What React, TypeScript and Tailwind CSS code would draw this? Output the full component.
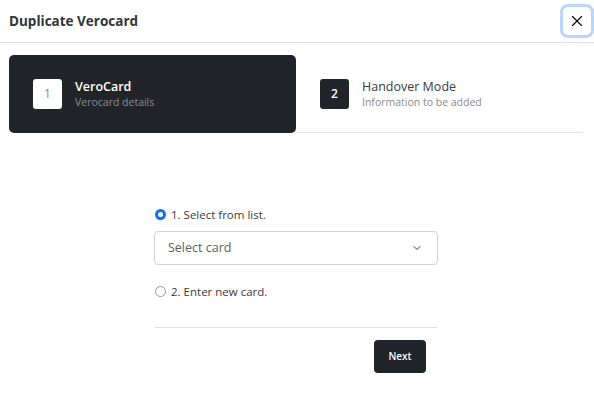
import { ChevronDown, X } from 'lucide-react'

const FONT = { fontFamily: '"Open Sans", Inter, sans-serif' }

function StepItem({
  num,
  title,
  subtitle,
  active,
}: {
  num: string
  title: string
  subtitle: string
  active?: boolean
}) {
  return (
    <div
      className={
        active
          ? 'flex h-[78px] flex-1 items-center gap-[13px] rounded-[5px] bg-[#212428] pl-[24px]'
          : 'flex h-[78px] flex-1 items-center gap-[13px] border-b border-[#e2e2e2] pl-[24px]'
      }
    >
      <div
        className={
          active
            ? 'flex h-[30px] w-[29px] items-center justify-center rounded-[3px] bg-white text-[12px] text-[#8a8a8a]'
            : 'flex h-[30px] w-[29px] items-center justify-center rounded-[3px] bg-[#212428] text-[12px] font-semibold text-white'
        }
      >
        {num}
      </div>
      <div className="flex flex-col">
        <span
          className={
            active
              ? 'text-[12.5px] leading-[17px] font-semibold text-white'
              : 'text-[12.5px] leading-[17px] text-[#3a3a3a]'
          }
        >
          {title}
        </span>
        <span
          className={
            active
              ? 'text-[10.5px] leading-[15px] text-[#8b8e93]'
              : 'text-[10.5px] leading-[15px] text-[#8a8a8a]'
          }
        >
          {subtitle}
        </span>
      </div>
    </div>
  )
}

export default function App() {
  return (
    <div className="h-[403px] w-[594px] bg-white" style={FONT}>
      <header className="flex h-[43px] items-center justify-between border-b border-[#dee2e6] pl-[9px] pr-[3px]">
        <h1 className="text-[13.5px] font-bold text-[#2f343a]">Duplicate Verocard</h1>
        <button
          type="button"
          className="flex h-[28px] w-[28px] items-center justify-center rounded-[5px] ring-[3px] ring-[#bcd6fb]"
        >
          <X size={18} strokeWidth={1.5} className="text-black" />
        </button>
      </header>

      <div className="mx-[9px] mt-[12px] mr-[11px] flex">
        <StepItem num="1" title="VeroCard" subtitle="Verocard details" active />
        <StepItem num="2" title="Handover Mode" subtitle="Information to be added" />
      </div>

      <div className="mt-[73px] ml-[154px] w-[284px]">
        <label className="flex items-center gap-[5px] text-[11.5px] text-[#3a3a3a]">
          <span className="ml-[1px] h-[11px] w-[11px] rounded-full border-[3px] border-[#0d6efd] bg-white" />
          1. Select from list.
        </label>
        <div className="mt-[8px] flex h-[34px] items-center justify-between rounded-[4px] border border-[#ced4da] pl-[13px] pr-[14px]">
          <span className="text-[12.5px] text-[#5d6166]">Select card</span>
          <ChevronDown size={12} strokeWidth={2} className="text-[#3a3a3a]" />
        </div>
        <label className="mt-[18px] flex items-center gap-[5px] text-[11.5px] text-[#3a3a3a]">
          <span className="ml-[1px] h-[11px] w-[11px] rounded-full border border-[#9a9a9a] bg-white" />
          2. Enter new card.
        </label>
        <div className="mt-[26px] border-t border-[#e2e2e2]" />
        <div className="mt-[12px] flex justify-end pr-[12px]">
          <button
            type="button"
            className="flex h-[33px] w-[52px] items-center justify-center rounded-[4px] bg-[#212428] text-[10px] font-semibold text-white"
          >
            Next
          </button>
        </div>
      </div>
    </div>
  )
}
